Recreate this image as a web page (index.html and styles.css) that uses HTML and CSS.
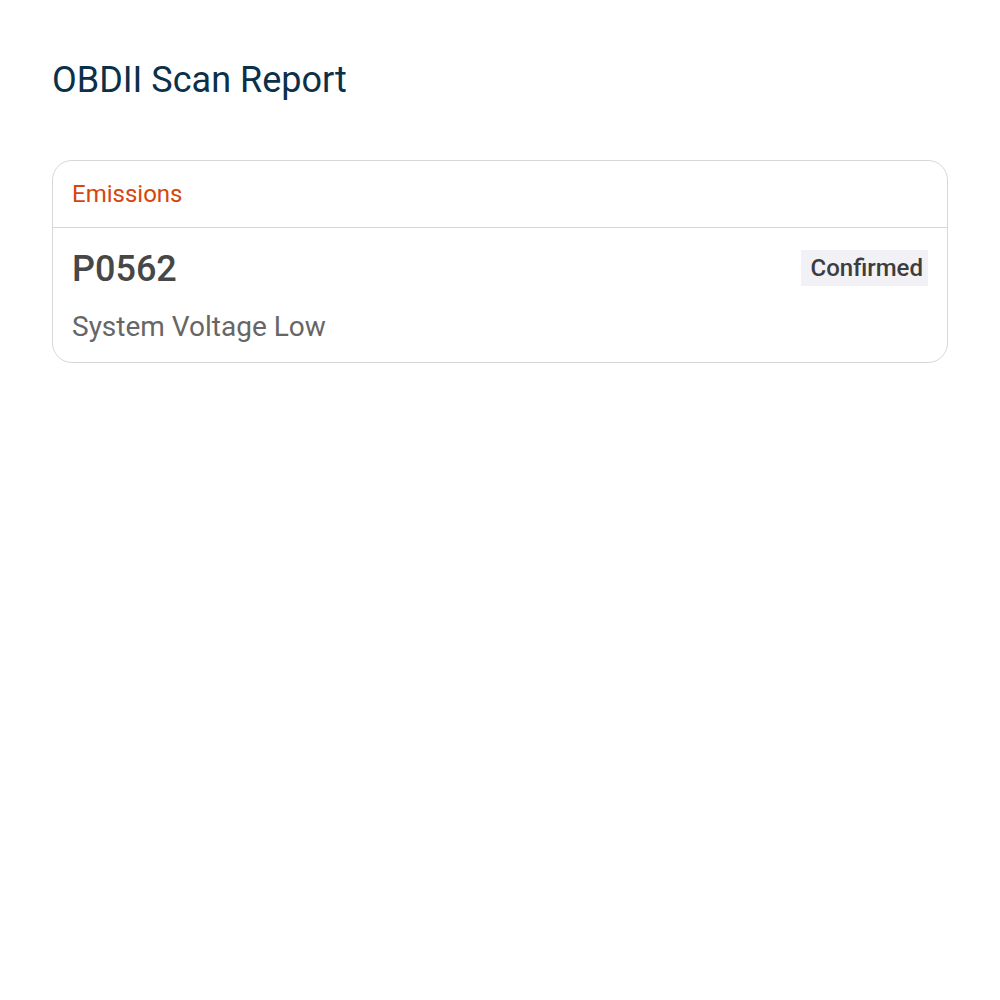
FILE: index.html
```html
<!DOCTYPE html>
<html>
<head>
<meta charset="utf-8">
<link rel="stylesheet" href="styles.css">
</head>
<body>
<main class="page">
  <h1 class="title">OBDII Scan Report</h1>
  <section class="card">
    <div class="card-head">Emissions</div>
    <div class="code-row">
      <div class="code-main">
        <div class="code">P0562</div>
        <div class="desc">System Voltage Low</div>
      </div>
      <span class="badge">Confirmed</span>
    </div>
  </section>
</main>
</body>
</html>
```
FILE: styles.css
```css
html, body { margin: 0; padding: 0; background: #fff; }
body { font-family: Roboto, "Noto Sans", sans-serif; }
.page { padding: 56px 52px; }
.title {
  margin: 0;
  font-size: 36px;
  font-weight: 400;
  color: #0b3049;
  line-height: 48px;
}
.card {
  margin-top: 56px;
  border: 1px solid #d8d8dc;
  border-radius: 20px;
  overflow: hidden;
}
.card-head {
  height: 67px;
  box-sizing: border-box;
  padding: 0 19px;
  display: flex;
  align-items: center;
  font-size: 24px;
  color: #d5460d;
  border-bottom: 1px solid #d8d8dc;
}
.code-row {
  display: flex;
  justify-content: space-between;
  align-items: flex-start;
  padding: 20px 19px 19px 19px;
}
.code {
  font-size: 36px;
  font-weight: 500;
  color: #474747;
  line-height: 42px;
}
.desc {
  margin-top: 21px;
  font-size: 28px;
  color: #666;
  line-height: 32px;
}
.badge {
  margin-top: 2px;
  background: #f2f1f6;
  color: #3d3d3d;
  font-size: 24px;
  font-weight: 500;
  padding: 0 5px 0 10px;
  line-height: 36px;
}
```
